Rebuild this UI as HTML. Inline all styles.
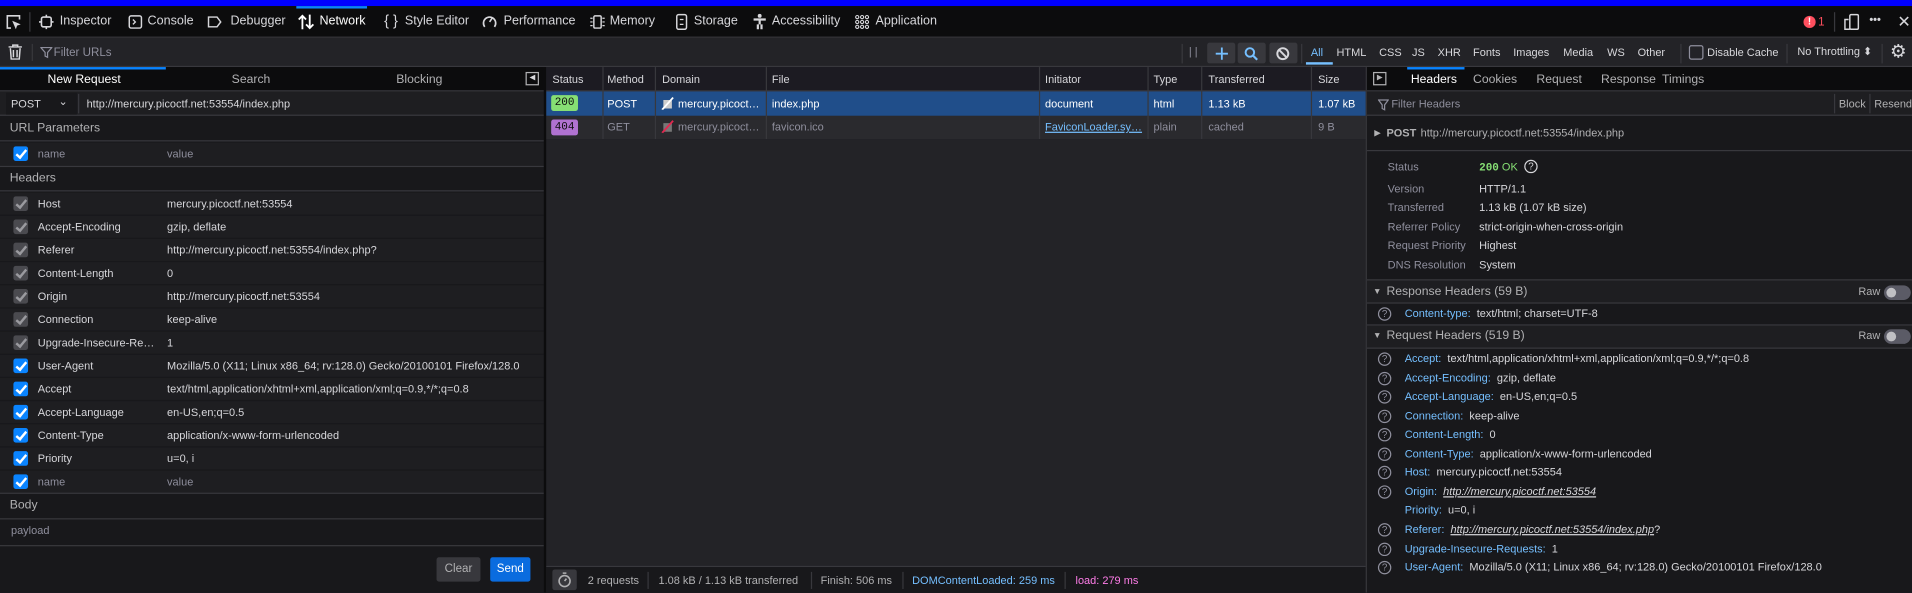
<!DOCTYPE html>
<html><head><meta charset="utf-8">
<style>
*{box-sizing:border-box;margin:0;padding:0}
html,body{width:1912px;height:593px;overflow:hidden;background:#1c1b22}
#w{position:absolute;left:0;top:0;width:1568px;height:486.3px;transform:scale(1.21939);transform-origin:0 0;font-family:"Liberation Sans",sans-serif;font-size:9px;color:#d7d7db;background:#1c1b22;overflow:hidden}
.a{position:absolute;white-space:nowrap}
.t1{font-size:10.3px;top:12px}
.dim{color:#8f8f9d}
.blue{color:#75bfff}
svg{position:absolute}
.row{position:absolute;left:0;width:446px;height:18px;background:#1e1e21}
.cb{position:absolute;left:11px;top:3px;width:12px;height:12px;border-radius:2px;background:#0a84ff}
.cb.g{background:#4a4a4f}
.cb:after{content:"";position:absolute;left:4px;top:1px;width:3px;height:7px;border:solid #fff;border-width:0 2px 2px 0;transform:rotate(40deg)}
.cb.g:after{border-color:#9a9a9f}
.hq{position:absolute;left:1130px;width:11px;height:11px;border:1px solid #8f8f9d;border-radius:50%;font-size:8px;color:#8f8f9d;text-align:center;line-height:9px}
</style></head><body><div id="w">
<div class="a" style="left:0;top:0;width:1568px;height:5px;background:#0000ff"></div>
<div class="a" style="left:0;top:5px;width:1568px;height:26px;background:#0c0c0d;border-bottom:1px solid #38383d"></div>
<div class="a" style="left:243px;top:5px;width:58px;height:2px;background:#0a84ff"></div>
<svg style="left:4px;top:11px" width="14" height="14" viewBox="0 0 14 14"><path d="M5 12H2V2h10v3" fill="none" stroke="#d7d7db" stroke-width="1.3"/><path d="M6 6l7 3-3 1-1 3z" fill="#d7d7db"/></svg>
<div class="a" style="left:24px;top:10px;width:1px;height:16px;background:#38383d"></div>
<svg style="left:32px;top:12px" width="12" height="12"><rect x="2" y="2" width="8" height="8" rx="1.5" fill="none" stroke="#d7d7db" stroke-width="1.3"/><path d="M6 0v2M6 10v2M0 6h2M10 6h2" stroke="#d7d7db" stroke-width="1.3"/></svg>
<div class="a t1" style="left:49px">Inspector</div>
<svg style="left:105px;top:12px" width="12" height="12"><rect x="1" y="1" width="10" height="10" rx="1.5" fill="none" stroke="#d7d7db" stroke-width="1.2"/><path d="M4 4l2 2-2 2" fill="none" stroke="#d7d7db" stroke-width="1.1"/></svg>
<div class="a t1" style="left:121px">Console</div>
<svg style="left:170px;top:12px" width="12" height="12"><path d="M1 2h7l3 4-3 4H1z" fill="none" stroke="#d7d7db" stroke-width="1.2"/></svg>
<div class="a t1" style="left:189px">Debugger</div>
<svg style="left:244px;top:11px" width="14" height="14"><path d="M4 13V2M1 5l3-3 3 3M10 1v11M7 9l3 3 3-3" fill="none" stroke="#fff" stroke-width="1.5"/></svg>
<div class="a t1" style="left:262px;color:#fff">Network</div>
<div class="a" style="left:315px;top:10px;font-size:12px">{ }</div>
<div class="a t1" style="left:332px">Style Editor</div>
<svg style="left:395px;top:11px" width="13" height="13"><path d="M2.5 11A5 5 0 1 1 10.5 11" fill="none" stroke="#d7d7db" stroke-width="1.4"/><path d="M6.5 7l2-3" stroke="#d7d7db" stroke-width="1.3"/></svg>
<div class="a t1" style="left:413px">Performance</div>
<svg style="left:484px;top:12px" width="12" height="12"><rect x="3" y="1" width="6" height="10" rx="1" fill="none" stroke="#d7d7db" stroke-width="1.2"/><path d="M0 3h2M0 6h2M0 9h2M10 3h2M10 6h2M10 9h2" stroke="#d7d7db"/></svg>
<div class="a t1" style="left:500px">Memory</div>
<svg style="left:554px;top:11px" width="10" height="14"><rect x="1" y="1" width="8" height="12" rx="1.5" fill="none" stroke="#d7d7db" stroke-width="1.2"/><path d="M3.5 5h3M3.5 9h3" stroke="#d7d7db"/></svg>
<div class="a t1" style="left:569px">Storage</div>
<svg style="left:617px;top:11px" width="12" height="14"><circle cx="6" cy="2" r="1.6" fill="#d7d7db"/><path d="M1 5h10M6 5v4M4.5 9v4M7.5 9v4" stroke="#d7d7db" stroke-width="1.8"/></svg>
<div class="a t1" style="left:633px">Accessibility</div>
<svg style="left:701px;top:12px" width="12" height="12" fill="none" stroke="#d7d7db" stroke-width=".9"><circle cx="2" cy="2" r="1.3"/><circle cx="6" cy="2" r="1.3"/><circle cx="10" cy="2" r="1.3"/><circle cx="2" cy="6" r="1.3"/><circle cx="6" cy="6" r="1.3"/><circle cx="10" cy="6" r="1.3"/><circle cx="2" cy="10" r="1.3"/><circle cx="6" cy="10" r="1.3"/><circle cx="10" cy="10" r="1.3"/></svg>
<div class="a t1" style="left:718px">Application</div>
<div class="a" style="left:1479px;top:13px;width:10px;height:10px;border-radius:50%;background:#ff4f5e;color:#fff;font-size:8px;font-weight:bold;text-align:center;line-height:10px">!</div>
<div class="a" style="left:1491px;top:13px;font-size:9.5px;color:#ff4f5e">1</div>
<div class="a" style="left:1504px;top:10px;width:1px;height:16px;background:#38383d"></div>
<svg style="left:1512px;top:11px" width="13" height="14"><rect x="5" y="1" width="7" height="12" rx="1" fill="none" stroke="#d7d7db" stroke-width="1.2"/><path d="M4 5H1v8h4" fill="none" stroke="#d7d7db" stroke-width="1.2"/></svg>
<div class="a" style="left:1533px;top:11px;font-size:9px;font-weight:bold;letter-spacing:0px">•••</div>
<div class="a" style="left:1556px;top:10px;font-size:13px">✕</div>
<div class="a" style="left:0;top:31px;width:1568px;height:24px;background:#232327;border-bottom:1px solid #38383d"></div>
<svg style="left:7px;top:36px" width="11" height="13"><path d="M0 2.5h11M3.5 2.5V1h4v1.5M1.5 3.5l.7 9h6.6l.7-9M4 5v6M7 5v6" fill="none" stroke="#d7d7db" stroke-width="1.2"/></svg>
<div class="a" style="left:26px;top:36px;width:1px;height:14px;background:#38383d"></div>
<svg style="left:33px;top:38px" width="10" height="10"><path d="M.5 1h9L6 5v4L4 8V5z" fill="none" stroke="#8f8f9d"/></svg>
<div class="a dim" style="left:44px;top:38px;font-size:9.5px">Filter URLs</div>
<div class="a" style="left:969px;top:36px;width:1px;height:16px;background:#38383d"></div>
<div class="a dim" style="left:975px;top:37px;font-size:9px">| |</div>
<div class="a" style="left:990px;top:35px;width:23px;height:17px;background:#38383d;border-radius:2px"></div>
<svg style="left:996px;top:38px" width="12" height="12"><path d="M6 1v10M1 6h10" stroke="#75bfff" stroke-width="1.5"/></svg>
<div class="a" style="left:1015px;top:35px;width:23px;height:17px;background:#38383d;border-radius:2px"></div>
<svg style="left:1020px;top:38px" width="12" height="12"><circle cx="5" cy="5" r="3.5" fill="none" stroke="#75bfff" stroke-width="1.6"/><path d="M7.5 7.5l3.5 3.5" stroke="#75bfff" stroke-width="1.8"/></svg>
<div class="a" style="left:1041px;top:35px;width:23px;height:17px;background:#38383d;border-radius:2px"></div>
<svg style="left:1046px;top:38px" width="12" height="12"><circle cx="6" cy="6" r="4.5" fill="none" stroke="#d7d7db" stroke-width="1.6"/><path d="M3 3l6 6" stroke="#d7d7db" stroke-width="1.6"/></svg>
<div class="a" style="left:1067px;top:36px;width:1px;height:16px;background:#38383d"></div>
<div class="a" style="left:1071px;top:51px;width:22px;height:2px;background:#75bfff"></div>
<div class="a" style="left:1075px;top:38px;color:#75bfff">All</div>
<div class="a" style="left:1096px;top:38px">HTML</div>
<div class="a" style="left:1131px;top:38px">CSS</div>
<div class="a" style="left:1158px;top:38px">JS</div>
<div class="a" style="left:1179px;top:38px">XHR</div>
<div class="a" style="left:1208px;top:38px">Fonts</div>
<div class="a" style="left:1241px;top:38px">Images</div>
<div class="a" style="left:1282px;top:38px">Media</div>
<div class="a" style="left:1318px;top:38px">WS</div>
<div class="a" style="left:1343px;top:38px">Other</div>
<div class="a" style="left:1378px;top:36px;width:1px;height:16px;background:#38383d"></div>
<div class="a" style="left:1385px;top:37px;width:12px;height:12px;border:1.5px solid #8f8f9d;border-radius:2px"></div>
<div class="a" style="left:1400px;top:38px">Disable Cache</div>
<div class="a" style="left:1465px;top:36px;width:1px;height:16px;background:#38383d"></div>
<div class="a" style="left:1474px;top:37px">No Throttling ⬍</div>
<div class="a" style="left:1543px;top:36px;width:1px;height:16px;background:#38383d"></div>
<div class="a" style="left:1550px;top:33px;font-size:15px">⚙</div>

<div class="a" style="left:0;top:55px;width:446px;height:431px;background:#18181b"></div>
<div class="a" style="left:0;top:55px;width:446px;height:20px;background:#0c0c0d;border-bottom:1px solid #38383d"></div>
<div class="a" style="left:0;top:55px;width:136px;height:2px;background:#0a84ff"></div>
<div class="a" style="left:39px;top:60px;font-size:10px;color:#fff">New Request</div>
<div class="a" style="left:190px;top:60px;font-size:10px;color:#b1b1b3">Search</div>
<div class="a" style="left:325px;top:60px;font-size:10px;color:#b1b1b3">Blocking</div>
<div class="a" style="left:431px;top:59px;width:11px;height:11px;border:1px solid #b1b1b3;font-size:6px;text-align:center;line-height:9px">◀</div>
<div class="a" style="left:0;top:75px;width:446px;height:20px;background:#1e1e21;border-bottom:1px solid #38383d"></div>
<div class="a" style="left:5px;top:76px;width:58px;height:18px;background:#18181b"></div>
<div class="a" style="left:9px;top:80px">POST</div>
<div class="a" style="left:48px;top:78px;font-size:9px">⌄</div>
<div class="a" style="left:64px;top:77px;width:1px;height:16px;background:#38383d"></div>
<div class="a" style="left:71px;top:80px">http://mercury.picoctf.net:53554/index.php</div>
<div class="a" style="left:0;top:95px;width:446px;height:21px;border-bottom:1px solid #38383d"></div>
<div class="a" style="left:8px;top:100px;font-size:10px;color:#b1b1b3">URL Parameters</div>
<div class="row" style="top:117px;height:19px"></div><div class="cb" style="top:120px"></div>
<div class="a dim" style="left:31px;top:121px">name</div>
<div class="a dim" style="left:137px;top:121px">value</div>
<div class="a" style="left:0;top:136px;width:446px;height:21px;border-top:1px solid #38383d;border-bottom:1px solid #38383d"></div>
<div class="a" style="left:8px;top:141px;font-size:10px;color:#b1b1b3">Headers</div>

<div style="position:absolute;left:0;top:158px;width:446px">
<div class="row" style="top:0"></div><div class="cb g" style="top:3px"></div><div class="a" style="left:31px;top:4px">Host</div><div class="a" style="left:137px;top:4px">mercury.picoctf.net:53554</div>
<div class="row" style="top:19px"></div><div class="cb g" style="top:22px"></div><div class="a" style="left:31px;top:23px">Accept-Encoding</div><div class="a" style="left:137px;top:23px">gzip, deflate</div>
<div class="row" style="top:38px"></div><div class="cb g" style="top:41px"></div><div class="a" style="left:31px;top:42px">Referer</div><div class="a" style="left:137px;top:42px">http://mercury.picoctf.net:53554/index.php?</div>
<div class="row" style="top:57px"></div><div class="cb g" style="top:60px"></div><div class="a" style="left:31px;top:61px">Content-Length</div><div class="a" style="left:137px;top:61px">0</div>
<div class="row" style="top:76px"></div><div class="cb g" style="top:79px"></div><div class="a" style="left:31px;top:80px">Origin</div><div class="a" style="left:137px;top:80px">http://mercury.picoctf.net:53554</div>
<div class="row" style="top:95px"></div><div class="cb g" style="top:98px"></div><div class="a" style="left:31px;top:99px">Connection</div><div class="a" style="left:137px;top:99px">keep-alive</div>
<div class="row" style="top:114px"></div><div class="cb g" style="top:117px"></div><div class="a" style="left:31px;top:118px">Upgrade-Insecure-Re…</div><div class="a" style="left:137px;top:118px">1</div>
<div class="row" style="top:133px"></div><div class="cb" style="top:136px"></div><div class="a" style="left:31px;top:137px">User-Agent</div><div class="a" style="left:137px;top:137px">Mozilla/5.0 (X11; Linux x86_64; rv:128.0) Gecko/20100101 Firefox/128.0</div>
<div class="row" style="top:152px"></div><div class="cb" style="top:155px"></div><div class="a" style="left:31px;top:156px">Accept</div><div class="a" style="left:137px;top:156px">text/html,application/xhtml+xml,application/xml;q=0.9,*/*;q=0.8</div>
<div class="row" style="top:171px"></div><div class="cb" style="top:174px"></div><div class="a" style="left:31px;top:175px">Accept-Language</div><div class="a" style="left:137px;top:175px">en-US,en;q=0.5</div>
<div class="row" style="top:190px"></div><div class="cb" style="top:193px"></div><div class="a" style="left:31px;top:194px">Content-Type</div><div class="a" style="left:137px;top:194px">application/x-www-form-urlencoded</div>
<div class="row" style="top:209px"></div><div class="cb" style="top:212px"></div><div class="a" style="left:31px;top:213px">Priority</div><div class="a" style="left:137px;top:213px">u=0, i</div>
<div class="row" style="top:228px"></div><div class="cb" style="top:231px"></div><div class="a dim" style="left:31px;top:232px">name</div><div class="a dim" style="left:137px;top:232px">value</div>
</div>
<div class="a" style="left:0;top:404px;width:446px;height:22px;border-top:1px solid #38383d;border-bottom:1px solid #38383d"></div>
<div class="a" style="left:8px;top:409px;font-size:10px;color:#b1b1b3">Body</div>
<div class="a dim" style="left:9px;top:430px">payload</div>
<div class="a" style="left:0;top:447px;width:446px;height:1px;background:#38383d"></div>
<div class="a" style="left:358px;top:457px;width:36px;height:20px;background:#38383d;border-radius:2px;color:#b1b1b3;text-align:center;line-height:20px;font-size:9.5px">Clear</div>
<div class="a" style="left:402px;top:457px;width:33px;height:20px;background:#0a6cdf;border-radius:2px;color:#fff;text-align:center;line-height:20px;font-size:9.5px">Send</div>
<div class="a" style="left:446px;top:55px;width:2px;height:431px;background:#0c0c0d"></div>

<div class="a" style="left:448px;top:55px;width:672px;height:431px;background:#232327"></div>
<div class="a" style="left:448px;top:55px;width:672px;height:20px;background:#1c1b22;border-bottom:1px solid #38383d"></div>
<div class="a" style="left:453px;top:60px">Status</div>
<div class="a" style="left:498px;top:60px">Method</div>
<div class="a" style="left:543px;top:60px">Domain</div>
<div class="a" style="left:633px;top:60px">File</div>
<div class="a" style="left:857px;top:60px">Initiator</div>
<div class="a" style="left:946px;top:60px">Type</div>
<div class="a" style="left:991px;top:60px">Transferred</div>
<div class="a" style="left:1081px;top:60px">Size</div>
<div class="a" style="left:448px;top:75px;width:672px;height:20px;background:#204e8a"></div>
<div class="a" style="left:448px;top:95px;width:672px;height:19px;background:#2a2a2e"></div>
<div class="a" style="left:494px;top:55px;width:1px;height:59px;background:#38383d"></div>
<div class="a" style="left:537px;top:55px;width:1px;height:59px;background:#38383d"></div>
<div class="a" style="left:628px;top:55px;width:1px;height:59px;background:#38383d"></div>
<div class="a" style="left:852px;top:55px;width:1px;height:59px;background:#38383d"></div>
<div class="a" style="left:941px;top:55px;width:1px;height:59px;background:#38383d"></div>
<div class="a" style="left:985px;top:55px;width:1px;height:59px;background:#38383d"></div>
<div class="a" style="left:1075px;top:55px;width:1px;height:59px;background:#38383d"></div>
<div class="a" style="left:452px;top:78px;width:22px;height:13px;background:#86de74;border-radius:2px;color:#0c0c0d;font-family:'Liberation Mono',monospace;font-size:9px;text-align:center;line-height:13px">200</div>
<div class="a" style="left:498px;top:80px;color:#fff">POST</div>
<svg style="left:542px;top:79px" width="11" height="11"><path d="M2 3h7v7H2z" fill="#ccc"/><path d="M1 11L10 1" stroke="#fff" stroke-width="1.5"/></svg>
<div class="a" style="left:556px;top:80px;color:#fff">mercury.picoct…</div>
<div class="a" style="left:633px;top:80px;color:#fff">index.php</div>
<div class="a" style="left:857px;top:80px;color:#fff">document</div>
<div class="a" style="left:946px;top:80px;color:#fff">html</div>
<div class="a" style="left:991px;top:80px;color:#fff">1.13 kB</div>
<div class="a" style="left:1081px;top:80px;color:#fff">1.07 kB</div>
<div class="a" style="left:452px;top:98px;width:22px;height:13px;background:#b072d1;border-radius:2px;color:#0c0c0d;font-family:'Liberation Mono',monospace;font-size:9px;text-align:center;line-height:13px">404</div>
<div class="a dim" style="left:498px;top:99px">GET</div>
<svg style="left:542px;top:98px" width="11" height="11"><path d="M2 3h7v7H2z" fill="#777"/><path d="M1 11L10 1" stroke="#e22850" stroke-width="1.5"/></svg>
<div class="a dim" style="left:556px;top:99px">mercury.picoct…</div>
<div class="a dim" style="left:633px;top:99px">favicon.ico</div>
<div class="a" style="left:857px;top:99px;color:#75bfff;text-decoration:underline">FaviconLoader.sy…</div>
<div class="a dim" style="left:946px;top:99px">plain</div>
<div class="a dim" style="left:991px;top:99px">cached</div>
<div class="a dim" style="left:1081px;top:99px">9 B</div>
<div class="a" style="left:448px;top:464px;width:672px;height:22px;background:#18181b;border-top:1px solid #38383d"></div>
<div class="a" style="left:453px;top:467px;width:20px;height:17px;background:#38383d;border-radius:2px"></div>
<svg style="left:457px;top:469px" width="12" height="13"><circle cx="6" cy="7.5" r="4.5" fill="none" stroke="#b1b1b3" stroke-width="1.3"/><path d="M4.5 1h3M6 7.5l1.5-2" stroke="#b1b1b3" stroke-width="1.3"/></svg>
<div class="a" style="left:482px;top:471px;color:#b1b1b3">2 requests</div>
<div class="a" style="left:531px;top:469px;width:1px;height:14px;background:#38383d"></div>
<div class="a" style="left:540px;top:471px;color:#b1b1b3">1.08 kB / 1.13 kB transferred</div>
<div class="a" style="left:665px;top:469px;width:1px;height:14px;background:#38383d"></div>
<div class="a" style="left:673px;top:471px;color:#b1b1b3">Finish: 506 ms</div>
<div class="a" style="left:740px;top:469px;width:1px;height:14px;background:#38383d"></div>
<div class="a" style="left:748px;top:471px;color:#75bfff">DOMContentLoaded: 259 ms</div>
<div class="a" style="left:873px;top:469px;width:1px;height:14px;background:#38383d"></div>
<div class="a" style="left:882px;top:471px;color:#ff7de9">load: 279 ms</div>

<div class="a" style="left:1120px;top:55px;width:1px;height:431px;background:#38383d"></div>
<div class="a" style="left:1121px;top:55px;width:447px;height:431px;background:#18181b"></div>
<div class="a" style="left:1121px;top:55px;width:447px;height:20px;background:#0c0c0d;border-bottom:1px solid #38383d"></div>
<div class="a" style="left:1126px;top:59px;width:11px;height:11px;border:1px solid #b1b1b3;font-size:6px;text-align:center;line-height:9px;color:#b1b1b3">▶</div>
<div class="a" style="left:1154px;top:55px;width:47px;height:2px;background:#0a84ff"></div>
<div class="a" style="left:1157px;top:60px;font-size:10px;color:#fff">Headers</div>
<div class="a" style="left:1208px;top:60px;font-size:10px;color:#b1b1b3">Cookies</div>
<div class="a" style="left:1260px;top:60px;font-size:10px;color:#b1b1b3">Request</div>
<div class="a" style="left:1313px;top:60px;font-size:10px;color:#b1b1b3">Response</div>
<div class="a" style="left:1363px;top:60px;font-size:10px;color:#b1b1b3">Timings</div>
<div class="a" style="left:1121px;top:75px;width:447px;height:20px;background:#1e1e21;border-bottom:1px solid #38383d"></div>
<svg style="left:1130px;top:81px" width="9" height="10"><path d="M.5 1h8L5.5 5v4L3.5 8V5z" fill="none" stroke="#8f8f9d"/></svg>
<div class="a dim" style="left:1141px;top:80px">Filter Headers</div>
<div class="a" style="left:1504px;top:77px;width:1px;height:16px;background:#38383d"></div>
<div class="a" style="left:1508px;top:80px;color:#b1b1b3">Block</div>
<div class="a" style="left:1533px;top:77px;width:1px;height:16px;background:#38383d"></div>
<div class="a" style="left:1537px;top:80px;color:#b1b1b3">Resend</div>
<div class="a" style="left:1127px;top:105px;font-size:7px;color:#b1b1b3">▶</div>
<div class="a" style="left:1137px;top:104px;font-weight:bold;color:#b1b1b3">POST</div>
<div class="a" style="left:1165px;top:104px;color:#b1b1b3">http://mercury.picoctf.net:53554/index.php</div>
<div class="a" style="left:1121px;top:123px;width:447px;height:1px;background:#38383d"></div>
<div class="a dim" style="left:1138px;top:132px">Status</div><div class="a" style="left:1213px;top:132px;color:#86de74"><b style="font-family:'Liberation Mono',monospace">200</b> OK</div>
<div class="a" style="left:1250px;top:131px;width:11px;height:11px;border:1px solid #d7d7db;border-radius:50%;font-size:8px;text-align:center;line-height:9px">?</div>
<div class="a dim" style="left:1138px;top:150px">Version</div><div class="a" style="left:1213px;top:150px">HTTP/1.1</div>
<div class="a dim" style="left:1138px;top:165px">Transferred</div><div class="a" style="left:1213px;top:165px">1.13 kB (1.07 kB size)</div>
<div class="a dim" style="left:1138px;top:181px">Referrer Policy</div><div class="a" style="left:1213px;top:181px">strict-origin-when-cross-origin</div>
<div class="a dim" style="left:1138px;top:196px">Request Priority</div><div class="a" style="left:1213px;top:196px">Highest</div>
<div class="a dim" style="left:1138px;top:212px">DNS Resolution</div><div class="a" style="left:1213px;top:212px">System</div>
<div class="a" style="left:1121px;top:229px;width:447px;height:20px;background:#1e1e21;border-top:1px solid #38383d;border-bottom:1px solid #38383d"></div>
<div class="a" style="left:1126px;top:236px;font-size:7px;color:#b1b1b3">▼</div>
<div class="a" style="left:1137px;top:234px;font-size:10px;color:#b1b1b3">Response Headers (59 B)</div>
<div class="a" style="left:1524px;top:234px;color:#b1b1b3">Raw</div>
<div class="a" style="left:1545px;top:234px;width:22px;height:12px;border-radius:6px;background:#5b5b66"></div><div class="a" style="left:1547px;top:236px;width:8px;height:8px;border-radius:50%;background:#c0c0c4"></div>
<div class="hq" style="top:252px">?</div><div class="a" style="left:1152px;top:252px"><span class="blue">Content-type:</span>&nbsp; text/html; charset=UTF-8</div>
<div class="a" style="left:1121px;top:266px;width:447px;height:20px;background:#1e1e21;border-top:1px solid #38383d;border-bottom:1px solid #38383d"></div>
<div class="a" style="left:1126px;top:272px;font-size:7px;color:#b1b1b3">▼</div>
<div class="a" style="left:1137px;top:270px;font-size:10px;color:#b1b1b3">Request Headers (519 B)</div>
<div class="a" style="left:1524px;top:270px;color:#b1b1b3">Raw</div>
<div class="a" style="left:1545px;top:270px;width:22px;height:12px;border-radius:6px;background:#5b5b66"></div><div class="a" style="left:1547px;top:272px;width:8px;height:8px;border-radius:50%;background:#c0c0c4"></div>
<div class="hq" style="top:289px">?</div><div class="a" style="left:1152px;top:289px"><span class="blue">Accept:</span>&nbsp; text/html,application/xhtml+xml,application/xml;q=0.9,*/*;q=0.8</div>
<div class="hq" style="top:305px">?</div><div class="a" style="left:1152px;top:305px"><span class="blue">Accept-Encoding:</span>&nbsp; gzip, deflate</div>
<div class="hq" style="top:320px">?</div><div class="a" style="left:1152px;top:320px"><span class="blue">Accept-Language:</span>&nbsp; en-US,en;q=0.5</div>
<div class="hq" style="top:336px">?</div><div class="a" style="left:1152px;top:336px"><span class="blue">Connection:</span>&nbsp; keep-alive</div>
<div class="hq" style="top:351px">?</div><div class="a" style="left:1152px;top:351px"><span class="blue">Content-Length:</span>&nbsp; 0</div>
<div class="hq" style="top:367px">?</div><div class="a" style="left:1152px;top:367px"><span class="blue">Content-Type:</span>&nbsp; application/x-www-form-urlencoded</div>
<div class="hq" style="top:382px">?</div><div class="a" style="left:1152px;top:382px"><span class="blue">Host:</span>&nbsp; mercury.picoctf.net:53554</div>
<div class="hq" style="top:398px">?</div><div class="a" style="left:1152px;top:398px"><span class="blue">Origin:</span>&nbsp; <i style="text-decoration:underline">http://mercury.picoctf.net:53554</i></div>
<div class="a" style="left:1152px;top:413px"><span class="blue">Priority:</span>&nbsp; u=0, i</div>
<div class="hq" style="top:429px">?</div><div class="a" style="left:1152px;top:429px"><span class="blue">Referer:</span>&nbsp; <i style="text-decoration:underline">http://mercury.picoctf.net:53554/index.php</i>?</div>
<div class="hq" style="top:445px">?</div><div class="a" style="left:1152px;top:445px"><span class="blue">Upgrade-Insecure-Requests:</span>&nbsp; 1</div>
<div class="hq" style="top:460px">?</div><div class="a" style="left:1152px;top:460px"><span class="blue">User-Agent:</span>&nbsp; Mozilla/5.0 (X11; Linux x86_64; rv:128.0) Gecko/20100101 Firefox/128.0</div>
</div></body></html>
